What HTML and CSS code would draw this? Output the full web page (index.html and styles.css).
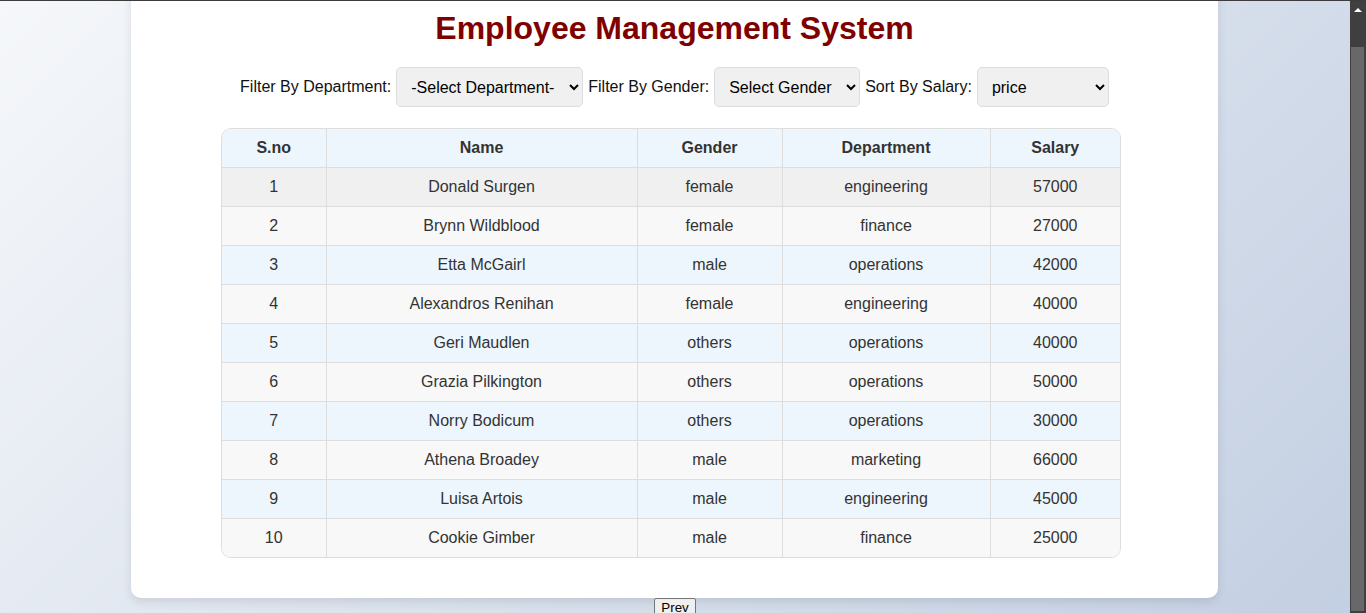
FILE: index.html
```html
<!DOCTYPE html>
<html lang="en">
<head>
<meta charset="utf-8">
<title>Employee Management System</title>
<link rel="stylesheet" href="styles.css">
</head>
<body>
<div class="frame-top"></div>
<div class="frame">
  <main class="viewport">
    <section class="card">
      <h1 class="title">Employee Management System</h1>
      <div class="filters">
        <label class="filter-label" for="dept">Filter By Department:</label>
        <select id="dept" class="filter-select dept">
          <option>-Select Department-</option>
          <option>engineering</option>
          <option>finance</option>
          <option>marketing</option>
          <option>operations</option>
        </select>
        <label class="filter-label" for="gender">Filter By Gender:</label>
        <select id="gender" class="filter-select gender">
          <option>Select Gender</option>
          <option>male</option>
          <option>female</option>
          <option>others</option>
        </select>
        <label class="filter-label" for="sort">Sort By Salary:</label>
        <select id="sort" class="filter-select sort">
          <option>price</option>
          <option>asc</option>
          <option>desc</option>
        </select>
      </div>
      <div class="table-wrap">
        <table class="emp-table">
          <colgroup>
            <col class="c-sno"><col class="c-name"><col class="c-gender"><col class="c-dept"><col class="c-salary">
          </colgroup>
          <thead>
            <tr><th>S.no</th><th>Name</th><th>Gender</th><th>Department</th><th>Salary</th></tr>
          </thead>
          <tbody>
            <tr class="hovered"><td>1</td><td>Donald Surgen</td><td>female</td><td>engineering</td><td>57000</td></tr>
            <tr><td>2</td><td>Brynn Wildblood</td><td>female</td><td>finance</td><td>27000</td></tr>
            <tr><td>3</td><td>Etta McGairl</td><td>male</td><td>operations</td><td>42000</td></tr>
            <tr><td>4</td><td>Alexandros Renihan</td><td>female</td><td>engineering</td><td>40000</td></tr>
            <tr><td>5</td><td>Geri Maudlen</td><td>others</td><td>operations</td><td>40000</td></tr>
            <tr><td>6</td><td>Grazia Pilkington</td><td>others</td><td>operations</td><td>50000</td></tr>
            <tr><td>7</td><td>Norry Bodicum</td><td>others</td><td>operations</td><td>30000</td></tr>
            <tr><td>8</td><td>Athena Broadey</td><td>male</td><td>marketing</td><td>66000</td></tr>
            <tr><td>9</td><td>Luisa Artois</td><td>male</td><td>engineering</td><td>45000</td></tr>
            <tr><td>10</td><td>Cookie Gimber</td><td>male</td><td>finance</td><td>25000</td></tr>
          </tbody>
        </table>
      </div>
    </section>
    <div class="pager">
      <button class="pager-btn">Prev</button>
    </div>
  </main>
  <div class="scrollbar">
    <div class="scroll-arrow"></div>
    <div class="scroll-thumb"></div>
  </div>
</div>
</body>
</html>
```
FILE: styles.css
```css
html, body {
  margin: 0;
  padding: 0;
  height: 100%;
  overflow: hidden;
}
body {
  font-family: "Liberation Sans", Arial, sans-serif;
  display: flex;
  flex-direction: column;
  color: #000;
}
.frame-top {
  height: 1px;
  background: #3c3c3c;
  flex: none;
}
.frame {
  flex: 1;
  display: flex;
  min-height: 0;
}
.viewport {
  flex: 1;
  overflow: hidden;
  background: linear-gradient(135deg, #f5f7fa 0%, #c3cfe2 100%);
}
.card {
  width: 1047px;
  margin: -34px 0 0 131px;
  padding: 20px;
  background: #fff;
  border-radius: 10px;
  box-shadow: 0 4px 10px rgba(0, 0, 0, 0.1);
  text-align: center;
}
.title {
  font-size: 32px;
  font-weight: bold;
  color: #800000;
  margin: 23px 0 19.88px;
}
.filters {
  display: flex;
  justify-content: center;
  align-items: center;
  gap: 5px;
  margin-bottom: 21px;
  font-size: 16px;
}
.filter-label {
  color: #111;
}
.filter-select {
  font-family: "Liberation Sans", Arial, sans-serif;
  font-size: 16px;
  height: 40px;
  padding: 1px 10px 0;
  background-color: #f0f0f0;
  border: 1px solid #ddd;
  border-radius: 5px;
  color: #000;
}
.dept { width: 187px; }
.gender { width: 146px; }
.sort { width: 132px; }
.table-wrap {
  width: 900px;
  margin: 0 0 20px 70px;
  border-radius: 10px;
  overflow: hidden;
  border: 1px solid #ddd;
  box-sizing: border-box;
}
.emp-table {
  width: 100%;
  border-collapse: collapse;
  table-layout: fixed;
  font-size: 16px;
  color: #333;
}
.c-sno { width: 104px; }
.c-name { width: 311px; }
.c-gender { width: 145px; }
.c-dept { width: 208px; }
.c-salary { width: auto; }
.emp-table th,
.emp-table td {
  padding: 10px;
  border: 1px solid #ddd;
  text-align: center;
  line-height: 18px;
}
.emp-table tr > :first-child { border-left: none; }
.emp-table tr > :last-child { border-right: none; }
.emp-table thead tr > * { border-top: none; }
.emp-table tbody tr:last-child > * { border-bottom: none; }
.emp-table th {
  background: #eef6fd;
  font-weight: bold;
  color: #333;
}
.emp-table tbody tr:nth-child(odd) { background: #eef6fd; }
.emp-table tbody tr:nth-child(even) { background: #f8f8f8; }
.emp-table tbody tr.hovered { background: #f0f0f0; }
.pager {
  text-align: center;
}
.pager-btn {
  font-family: "Liberation Sans", Arial, sans-serif;
  font-size: 13.33px;
  padding: 1px 6px;
  background: #efefef;
  border: 1px solid #767676;
  border-radius: 2px;
  color: #000;
}
.scrollbar {
  width: 16px;
  flex: none;
  background: #3f3f3f;
  display: flex;
  flex-direction: column;
  align-items: center;
}
.scroll-arrow {
  margin-top: 7px;
  width: 0;
  height: 0;
  border-left: 4px solid transparent;
  border-right: 4px solid transparent;
  border-bottom: 4px solid #fff;
}
.scroll-thumb {
  margin-top: 35px;
  width: 13px;
  flex: 1;
  margin-bottom: 2px;
  background: #686868;
  align-self: flex-end;
  margin-right: 2px;
}
```
